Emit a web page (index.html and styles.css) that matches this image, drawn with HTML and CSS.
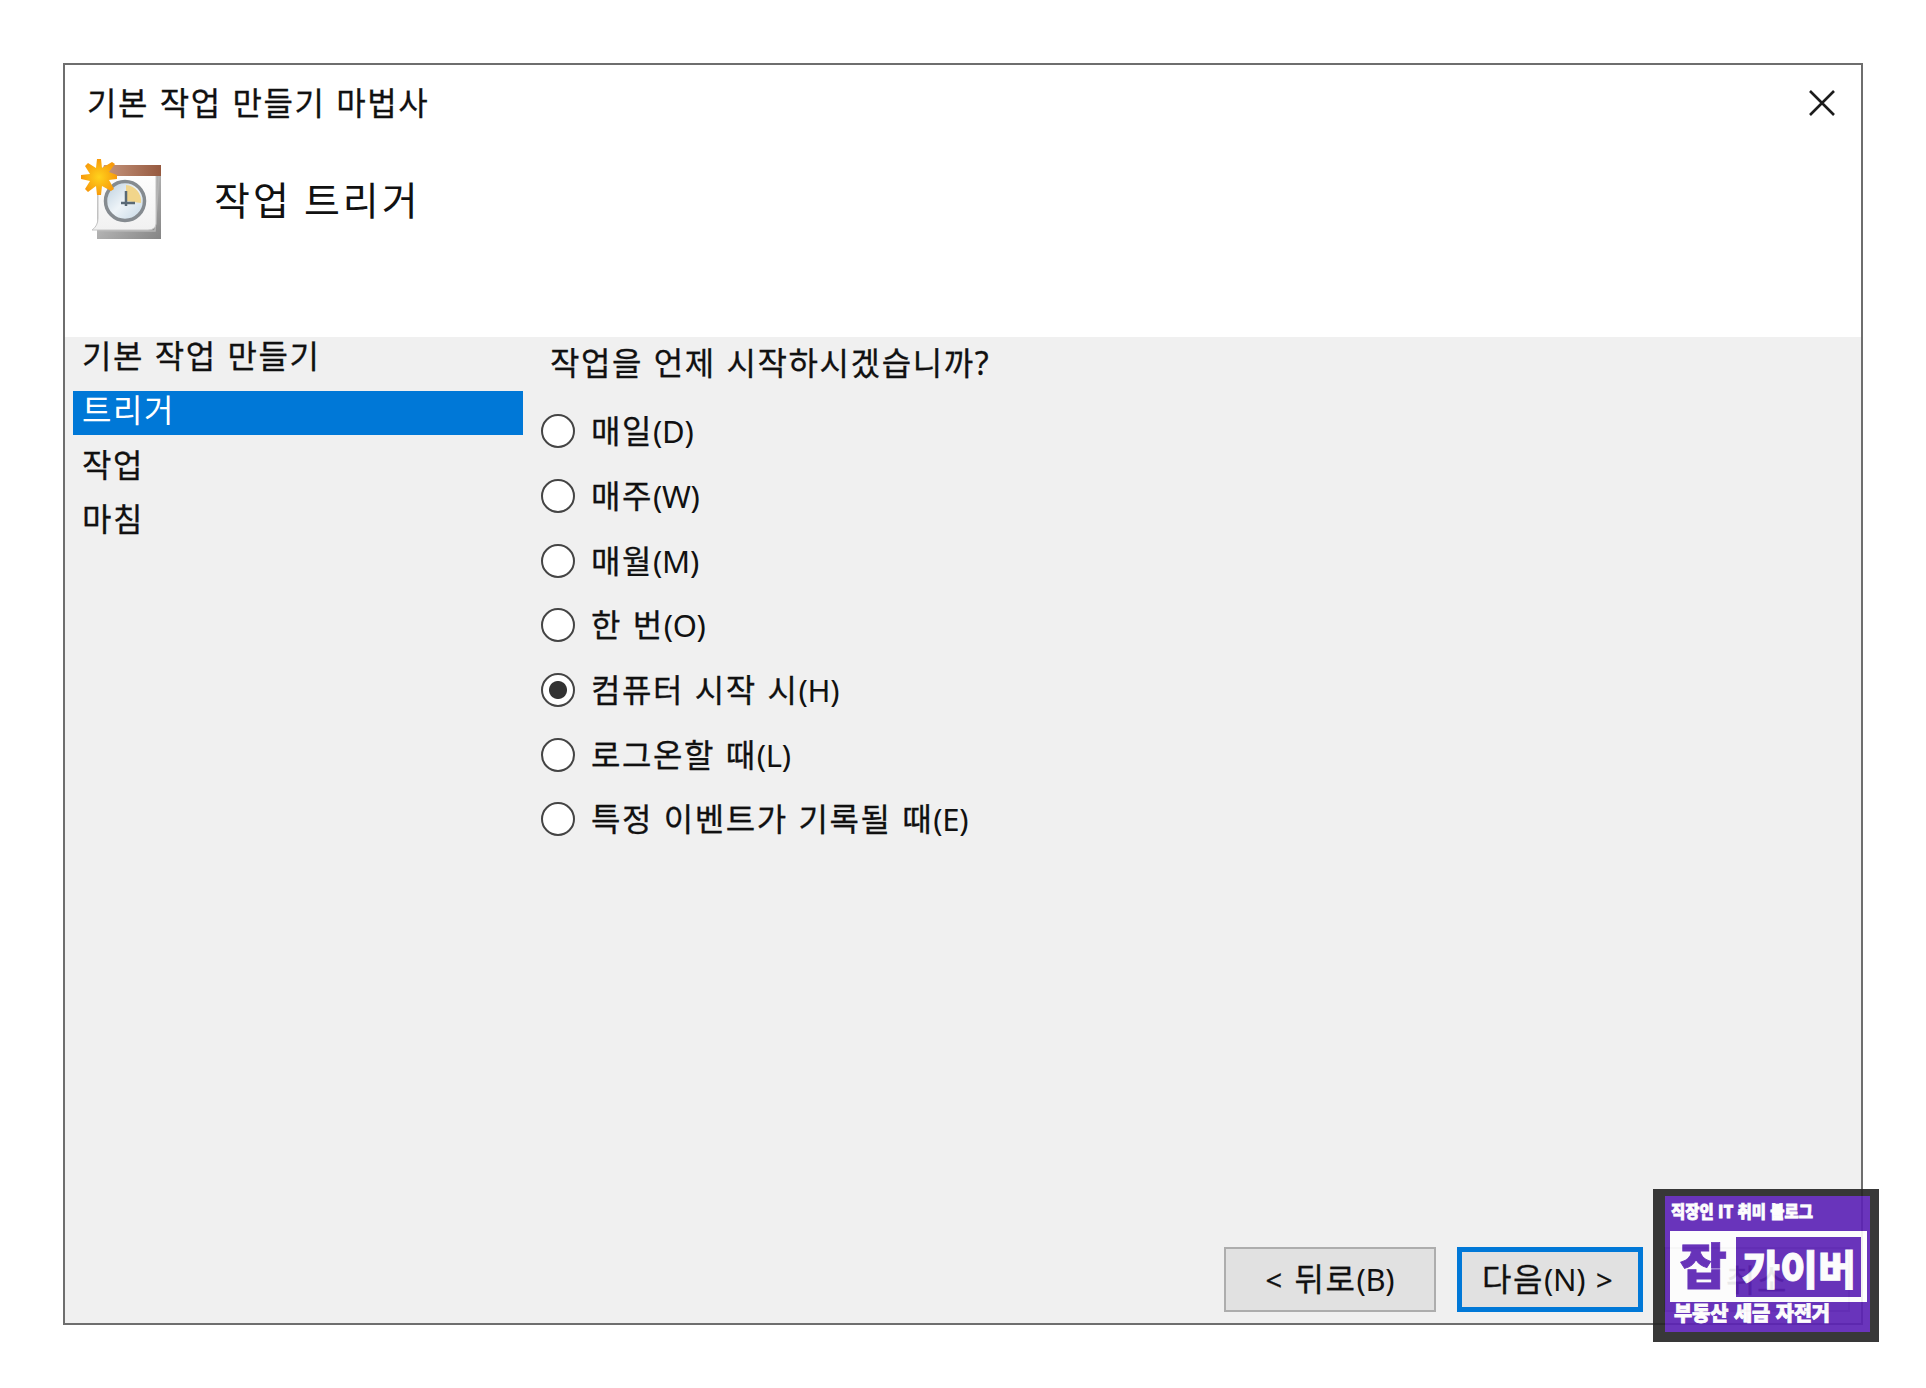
FILE: index.html
```
<!DOCTYPE html>
<html lang="ko">
  <head>
    <meta charset="UTF-8" />
    <meta name="viewport" content="width=device-width, initial-scale=1.0" />
    <title>기본 작업 만들기 마법사</title>
    <link rel="stylesheet" href="styles.css">
  </head>
  <body>
    <div class="dialog">
      <header class="header">
        <div class="titlebar">
          <span class="title">기본 작업 만들기 마법사</span>
          <svg class="close" viewBox="0 0 28 28">
            <path d="M2 2 L26 26 M26 2 L2 26" />
          </svg>
        </div>
        <div class="heading">
          <svg class="task-icon" viewBox="0 0 84 84">
            <defs>
              <linearGradient id="paper" x1="0" y1="0" x2="0" y2="1">
                <stop offset="0" stop-color="#fff" />
                <stop offset="1" stop-color="#f1f1f1" />
              </linearGradient>
              <linearGradient id="edge" x1="0" y1="0" x2="1" y2="1">
                <stop offset="0" stop-color="#d8d8d8" />
                <stop offset="1" stop-color="#858585" />
              </linearGradient>
              <linearGradient id="binding" x1="0" y1="0" x2="1" y2="0">
                <stop offset="0" stop-color="#c99a82" />
                <stop offset="1" stop-color="#96593f" />
              </linearGradient>
              <linearGradient id="glass" x1="0" y1="0" x2="1" y2="1">
                <stop offset="0" stop-color="#b9cddd" />
                <stop offset="0.5" stop-color="#eef4f8" />
                <stop offset="1" stop-color="#c3d6e4" />
              </linearGradient>
              <radialGradient id="sun">
                <stop offset="0" stop-color="#ffd21c" />
                <stop offset="1" stop-color="#f79a0b" />
              </radialGradient>
            </defs>
            <path d="M17 16 H81 V81 H17 Z" fill="url(#edge)" />
            <path d="M17 73 H75 L79 16" fill="none" stroke="#b5b5b5" stroke-width="1.5" />
            <path d="M18 10 H76 V66 Q75 72 68 72 H12 Q18 68 18 60 Z" fill="url(#paper)" stroke="#c4c4c4" />
            <path d="M24 7 H81 V18 H20 Z" fill="url(#binding)" />
            <circle cx="45" cy="43" r="19.5" fill="url(#glass)" stroke="#858b90" stroke-width="3.5" />
            <path d="M46 43 V27 A16 16 0 0 1 61 45 Z" fill="#f1d58b" />
            <path d="M46 33 V45 H55 M46 45 V48 M46 45 H41" fill="none" stroke="#596975" stroke-width="2.5" />
            <path d="M17 1 H21 L22 10 L32 4 L35 6 L29 14 L37 17 V21 L29 22 L34 31 L31 33 L22 28 L21 37 H17 L16 28 L8 34 L5 31 L10 23 L1 21 V17 L10 16 L5 8 L8 5 L16 10 Z" fill="url(#sun)" />
          </svg>
          <h1>작업 트리거</h1>
        </div>
      </header>

      <div class="content">
        <ul class="steps">
          <li>기본 작업 만들기</li>
          <li class="active">트리거</li>
          <li>작업</li>
          <li>마침</li>
        </ul>
        <form class="triggers">
          <p class="question">작업을 언제 시작하시겠습니까?</p>
          <label><input type="radio" name="trigger" />매일<span class="key">(D)</span></label>
          <label><input type="radio" name="trigger" />매주<span class="key">(W)</span></label>
          <label><input type="radio" name="trigger" />매월<span class="key">(M)</span></label>
          <label><input type="radio" name="trigger" />한 번<span class="key">(O)</span></label>
          <label><input type="radio" name="trigger" checked />컴퓨터 시작 시<span class="key">(H)</span></label>
          <label><input type="radio" name="trigger" />로그온할 때<span class="key">(L)</span></label>
          <label><input type="radio" name="trigger" />특정 이벤트가 기록될 때<span class="key">(E)</span></label>
        </form>
      </div>

      <footer class="footer">
        <button class="back"><span class="arrow">&lt;</span> 뒤로<span class="key">(B)</span></button>
        <button class="next">다음<span class="key">(N)</span> <span class="arrow">&gt;</span></button>
        <button class="cancel">취소</button>
      </footer>
    </div>

    <!-- blog badge over the corner of the dialog -->
    <svg class="badge" viewBox="0 0 226 153">
      <rect width="226" height="153" fill="#252525" />
      <rect x="12" y="7" width="205" height="136" fill="#5c22b6" />
      <rect x="17" y="42" width="197" height="71" fill="#fff" />
      <rect x="83" y="48" width="125" height="60" fill="#5c22b6" />
      <text x="18" y="28.5" font-size="17" textLength="142" lengthAdjust="spacingAndGlyphs">직장인 IT 취미 블로그</text>
      <text class="purple" x="27" y="95" font-size="49" textLength="47" lengthAdjust="spacingAndGlyphs">잡</text>
      <text x="89" y="96" font-size="41" textLength="114" lengthAdjust="spacingAndGlyphs">가이버</text>
      <text x="21" y="132" font-size="20" textLength="156" lengthAdjust="spacingAndGlyphs">부동산 세금 자전거</text>
    </svg>
  </body>
</html>
```
FILE: styles.css
```
* {
  box-sizing: border-box;
  margin: 0;
  padding: 0;
}

body {
  height: 1388px;
  padding: 63px;
  background-color: #fff;
  color: #111;
  font-family: 'Noto Sans', 'Noto Sans CJK KR', sans-serif;
  font-size: 32px;
  line-height: 44px;
  letter-spacing: 1.6px;
  word-spacing: 0.7px;
  -webkit-text-stroke: 0.3px;
  overflow: hidden;
}

.dialog {
  display: flex;
  flex-direction: column;
  width: 1800px;
  height: 1262px;
  border: 2px solid #6e6e6e;
  background-color: #f0f0f0;
}

.header {
  height: 272px;
  background-color: #fff;
}

.titlebar {
  display: flex;
  justify-content: space-between;
  align-items: center;
  height: 75px;
  padding: 0 25px 0 22px;
}

.close {
  width: 28px;
  height: 28px;
  fill: none;
  stroke: #1c1c1c;
  stroke-width: 2.6;
}

.heading {
  display: flex;
  align-items: center;
  gap: 50px;
  height: 119px;
  padding-left: 15px;
}

.task-icon {
  width: 84px;
  height: 84px;
}

h1 {
  font-size: 39px;
  font-weight: normal;
  letter-spacing: 3px;
  word-spacing: -1px;
  -webkit-text-stroke: 0;
}

.content {
  display: flex;
  flex: 1;
}

.steps {
  width: 458px;
  padding-left: 8px;
  list-style: none;
}

.steps li {
  height: 44px;
  margin-bottom: 10.4px;
  padding-left: 9px;
  line-height: 38px;
}

.steps .active {
  background-color: #0078d7;
  color: #fff;
  -webkit-text-stroke: 0;
}

.triggers {
  padding: 4px 0 0 18px;
}

.question {
  margin-bottom: 14px;
  padding-left: 9px;
}

.triggers label {
  display: flex;
  align-items: center;
  height: 64.7px;
  white-space: pre;
}

.triggers input {
  width: 34px;
  height: 34px;
  margin-right: 16px;
  border: 2.5px solid #444;
  border-radius: 50%;
  background-color: #fff;
  appearance: none;
}

.triggers input:checked {
  background-image: radial-gradient(circle, #333 8.5px, #fff 9.5px);
}

.key {
  font-size: 31px;
  letter-spacing: -0.3px;
  -webkit-text-stroke: 0;
}

.footer {
  display: flex;
  justify-content: flex-end;
  gap: 21px;
  padding: 0 11px 11px 0;
}

.footer button {
  width: 186px;
  height: 65px;
  border: 2px solid #adadad;
  background-color: #e1e1e1;
  color: #111;
  font: inherit;
  letter-spacing: inherit;
  word-spacing: inherit;
}

.footer .back {
  width: 212px;
}

.footer .next {
  border: 5px solid #0078d7;
  padding-right: 4px;
}

.arrow {
  font-size: 29px;
}

.badge {
  position: absolute;
  left: 1653px;
  top: 1189px;
  width: 226px;
  height: 153px;
  opacity: 0.91;
}

.badge text {
  fill: #fff;
  font-family: 'Noto Sans CJK KR', sans-serif;
  font-weight: 900;
  letter-spacing: 0;
  word-spacing: 0;
  stroke: #fff;
  stroke-width: 0.8;
  -webkit-text-stroke: 0.8px #fff;
}

.badge .purple {
  fill: #5c22b6;
  stroke: #5c22b6;
  -webkit-text-stroke: 0.8px #5c22b6;
}
```
